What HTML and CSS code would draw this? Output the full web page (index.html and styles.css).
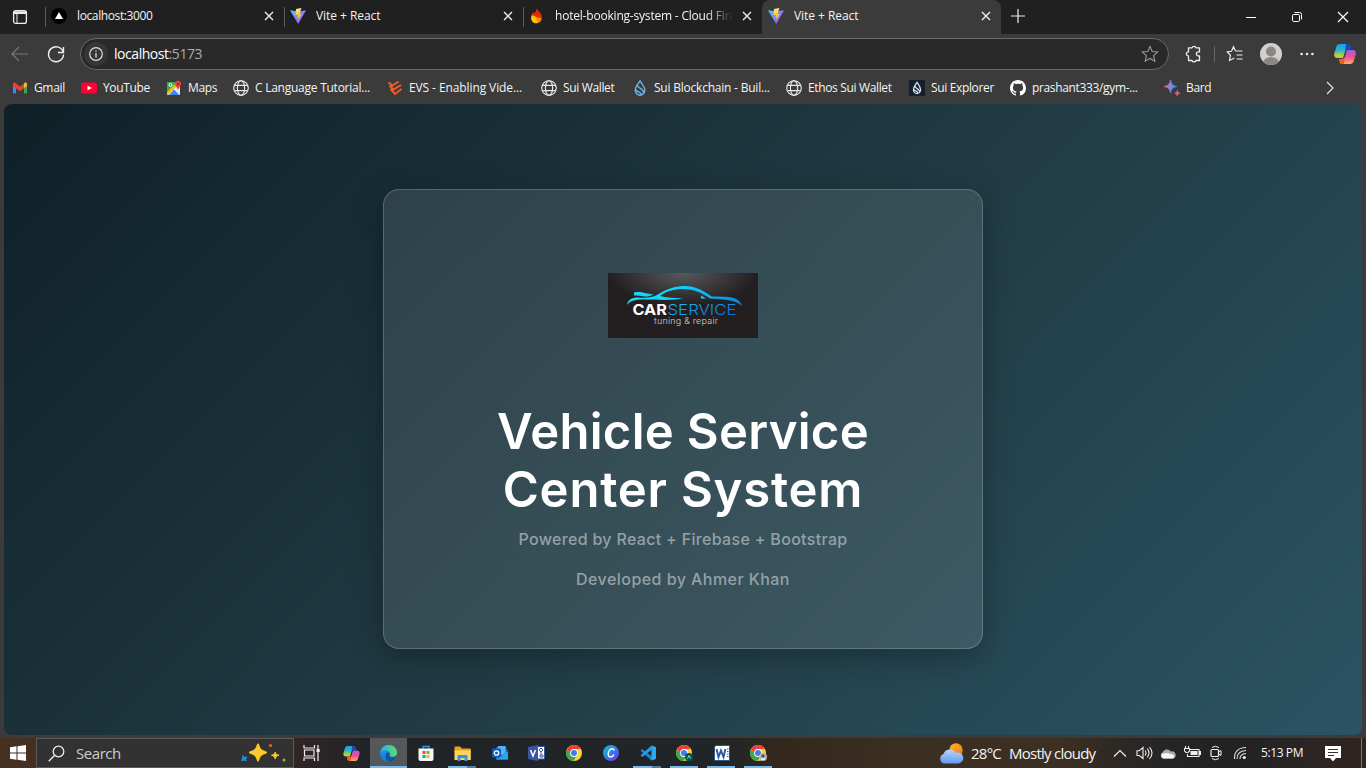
FILE: index.html
```html
<!DOCTYPE html>
<html lang="en">
<head>
<meta charset="utf-8">
<title>Vite + React</title>
<link rel="stylesheet" href="styles.css">
</head>
<body>
<svg class="defs" width="0" height="0">
  <defs>
    <linearGradient id="vA" x1="0" y1="0" x2="1" y2="1"><stop offset="0" stop-color="#41d1ff"/><stop offset="1" stop-color="#bd34fe"/></linearGradient>
    <linearGradient id="vB" x1="0" y1="0" x2="0" y2="1"><stop offset="0" stop-color="#ffea83"/><stop offset="1" stop-color="#ffa800"/></linearGradient>
    <linearGradient id="cpA" x1="0" y1="0" x2="0" y2="1"><stop offset="0" stop-color="#1b9df0"/><stop offset=".45" stop-color="#28b6c8"/><stop offset=".8" stop-color="#b5cf3a"/><stop offset="1" stop-color="#ffb52b"/></linearGradient>
    <linearGradient id="cpB" x1="0" y1="0" x2="0" y2="1"><stop offset="0" stop-color="#a25bf0"/><stop offset=".5" stop-color="#ee5090"/><stop offset="1" stop-color="#ffae62"/></linearGradient>
    <linearGradient id="bd" x1="0" y1="0" x2="1" y2="0"><stop offset="0" stop-color="#e8706c"/><stop offset=".5" stop-color="#8a80dc"/><stop offset="1" stop-color="#1d9bf0"/></linearGradient>
    <linearGradient id="edA" x1="0" y1="0" x2="1" y2="0"><stop offset="0" stop-color="#2aaeea"/><stop offset="1" stop-color="#5be06a"/></linearGradient>
    <linearGradient id="edB" x1="0" y1="0" x2="0" y2="1"><stop offset="0" stop-color="#1da1e6"/><stop offset="1" stop-color="#1878cc"/></linearGradient>
    <linearGradient id="cv" x1="0" y1="0" x2="1" y2="1"><stop offset="0" stop-color="#12c3ce"/><stop offset=".5" stop-color="#2f80e8"/><stop offset="1" stop-color="#7d2ae8"/></linearGradient>
    <linearGradient id="wx" x1="0" y1="0" x2="0" y2="1"><stop offset="0" stop-color="#b8d6ff"/><stop offset="1" stop-color="#5f9af0"/></linearGradient>
    <linearGradient id="sun" x1="0" y1="0" x2="1" y2="1"><stop offset="0" stop-color="#ffb52b"/><stop offset="1" stop-color="#f07812"/></linearGradient>
    <linearGradient id="car" x1="0" y1="0" x2="1" y2="0"><stop offset="0" stop-color="#18e0f8"/><stop offset=".5" stop-color="#08d2fa"/><stop offset="1" stop-color="#0c7fe0"/></linearGradient>
    <linearGradient id="svc" x1="0" y1="0" x2="1" y2="1"><stop offset="0" stop-color="#1ccaf0"/><stop offset="1" stop-color="#0d60d8"/></linearGradient>
    <radialGradient id="glow" cx=".5" cy="0" r=".5"><stop offset="0" stop-color="#58585c"/><stop offset="1" stop-color="#231f20"/></radialGradient>
    <symbol id="vite" viewBox="0 0 16 16"><path d="M0 2.2 8.2 16 16 2.2 8.4 3.6Z" fill="url(#vA)"/><path d="M11.4 0 6 1.1 5.500 7.300 8 6.800 7.400 10.600 8.800 10.200 7.900 13 11.800 6 9.400 6.400Z" fill="url(#vB)"/></symbol>
    <symbol id="x" viewBox="0 0 10 10"><path d="M1 1 9 9M9 1 1 9" stroke="#eee" stroke-width="1.4" fill="none"/></symbol>
    <symbol id="globe" viewBox="0 0 16 16"><g fill="none" stroke="#e8e8e8" stroke-width="1.15"><circle cx="8" cy="8" r="7.3"/><ellipse cx="8" cy="8" rx="3.6" ry="7.3"/><path d="M1.5 5.4h13M1.5 10.6h13"/></g></symbol>
    <symbol id="drop" viewBox="0 0 16 16"><path d="M8 .9C10 3.9 12.8 6.8 12.8 10.2A4.8 5 0 0 1 3.2 10.2C3.2 6.8 6 3.9 8 .9ZM5.6 5C5.3 9 11 7.2 11.6 13M3.5 9.3C5 12.8 8.2 10.6 9.5 15" fill="none" stroke="currentColor" stroke-width="1.4"/></symbol>
    <symbol id="dropS" viewBox="0 0 16 16"><path d="M8 2.300C9.500 4.700 11.600 7 11.600 9.700A3.600 3.800 0 0 1 4.400 9.700C4.400 7 6.500 4.700 8 2.300ZM6 6C6 9 10 7.700 10.700 12M4.600 9.300C6 11.700 8 10 9 13.400" fill="none" stroke="currentColor" stroke-width="1.200"/></symbol>
    <symbol id="copilot" viewBox="0 0 22 20"><path d="M6 0h7.5c1.8 0 2.4 1 2.8 2.6L17 5h-3.3c-1.6 0-2.3 1-2.8 2.7L9 14H3.5C.6 14-.4 12 .4 9L2.2 3.3C2.9 1 4 0 6 0Z" fill="url(#cpA)"/><path d="M12 0h1.8c1.5 0 2.2 1 2.6 2.6L17 5h-3.4c-1.3 0-1.9.5-2.4 1.7Z" fill="#1747c4"/><path d="M16 20H8.4c-1.8 0-2.4-1-2.8-2.6L5 15h3.2c1.6 0 2.3-1 2.8-2.7L13 6h5.5c2.9 0 3.9 2 3.1 5l-1.8 5.7C19.1 19 18 20 16 20Z" fill="url(#cpB)"/><path d="M10 20H8.3c-1.7 0-2.3-1-2.7-2.6L5 15h3.2c1.3 0 1.9-.5 2.5-1.7Z" fill="#f15b2a"/></symbol>
    <symbol id="chrome" viewBox="0 0 16 16"><circle cx="8" cy="8" r="8" fill="#ffd23c"/><path d="M1.1 4A8 8 0 0 1 14.9 4H8L4.5 10Z" fill="#ea4335"/><path d="M1.1 4A8 8 0 0 0 7.3 16l4-6L4.7 10.2Z" fill="#34a853"/><circle cx="8" cy="8" r="3.9" fill="#fff"/><circle cx="8" cy="8" r="3" fill="#3b7ded"/></symbol>
  </defs>
</svg>

<header class="tabs">
  <svg class="side-icon" width="16" height="16" viewBox="0 0 16 16"><rect x="1.6" y="1.6" width="12.8" height="12.8" rx="2.2" fill="none" stroke="#eee" stroke-width="1.3"/><path d="M1.5 2.3h13v2.700h-13z" fill="#eee"/><path d="M5 5v9" stroke="#eee"/></svg>
  <div class="tab"><svg width="16" height="16" viewBox="0 0 16 16"><circle cx="8" cy="8" r="8" fill="#000"/><path d="M8 4 12 11H4Z" fill="#fff"/></svg><span class="title t1">localhost:3000</span><svg class="close" width="10" height="10"><use href="#x"/></svg></div>
  <div class="tab"><svg width="16" height="16"><use href="#vite"/></svg><span class="title t2">Vite + React</span><svg class="close" width="10" height="10"><use href="#x"/></svg></div>
  <div class="tab"><svg width="16" height="16" viewBox="0 0 16 16"><path d="M7.5.5C9 3 13 5 13 9.5A5.500 5.800 0 0 1 2 10C2 7 3.500 5.500 4 4L5.300 5.500C6.500 4 7.500 2.500 7.500.5Z" fill="#dd2c00"/><path d="M2.500 7.500C5 7 8.500 9 9 14.500 5 17 1 13 2.500 7.500Z" fill="#ffc400"/><path d="M6 8.500c2 1.500 3 3.500 3 6 2-.6 3-2 3.500-4Z" fill="#ff9100"/></svg><span class="title t3 fade">hotel-booking-system - Cloud Fire</span><svg class="close" width="10" height="10"><use href="#x"/></svg></div>
  <div class="tab active"><svg width="16" height="16"><use href="#vite"/></svg><span class="title t2">Vite + React</span><svg class="close" width="10" height="10"><use href="#x"/></svg></div>
  <svg class="plus" width="14" height="14" viewBox="0 0 14 14"><path d="M7 0v14M0 7h14" stroke="#eee" stroke-width="1.2"/></svg>
  <div class="winctl">
    <svg width="12" height="12" viewBox="0 0 12 12"><path d="M1 6.500h10" stroke="#fff"/></svg>
    <svg width="12" height="12" viewBox="0 0 12 12"><g fill="none" stroke="#fff"><rect x="1.500" y="3.500" width="7" height="7" rx="1.200"/><path d="M3.500 1.500h5a2 2 0 0 1 2 2v5"/></g></svg>
    <svg width="12" height="12" viewBox="0 0 12 12"><path d="M1 1 11 11M11 1 1 11" stroke="#fff" stroke-width="1.200"/></svg>
  </div>
</header>

<nav class="toolbar">
  <svg width="18" height="16" viewBox="0 0 18 16"><path d="M8 1 1 8l7 7M1 8h16" fill="none" stroke="#777" stroke-width="1.200"/></svg>
  <svg class="reload" width="18" height="18" viewBox="0 0 18 18"><path d="M16.300 7.500A7.500 7.500 0 1 0 16.500 9.500M16.500 2v5.500H11" fill="none" stroke="#eee" stroke-width="1.400"/></svg>
  <div class="address">
    <span class="info"><svg width="14" height="14" viewBox="0 0 14 14"><circle cx="7" cy="7" r="6.300" fill="none" stroke="#ddd" stroke-width="1.200"/><path d="M7 6v4.500M7 3.500v1.300" stroke="#ddd" stroke-width="1.300"/></svg></span>
    <span class="url">localhost<i>:5173</i></span>
    <svg class="star" width="18" height="18" viewBox="0 0 18 18"><path d="M9 1.500 11.200 6.500 16.700 7 12.600 10.700 13.800 16.200 9 13.400 4.200 16.200 5.400 10.700 1.300 7 6.800 6.500Z" fill="none" stroke="#999" stroke-width="1.100"/></svg>
  </div>
  <div class="tools">
    <svg width="17" height="18" viewBox="0 0 17 18"><path d="M5 2.800H7A2.100 2.100 0 0 1 11 2.800H14.500V6.800H13.500A2.100 2.100 0 0 0 13.500 11H14.500V15.500H11A2.100 2.100 0 0 1 7 15.500H3.500V11A2.100 2.100 0 0 1 3.500 6.800V2.800Z" fill="none" stroke="#eee" stroke-width="1.300" stroke-linejoin="round"/></svg>
    <span class="sep"></span>
    <svg class="favs" width="18" height="18" viewBox="0 0 18 18"><path d="M9.500 6 7.500 1.800 5.500 6.300 1.200 7 4.400 10.300 3.500 15.500 8.300 13M9.500 6H16.500M10.500 10H16.500M10.500 14H16.500" fill="none" stroke="#eee" stroke-width="1.200"/></svg>
    <svg class="avatar" width="22" height="22" viewBox="0 0 22 22"><clipPath id="av"><circle cx="11" cy="11" r="11"/></clipPath><g clip-path="url(#av)"><path d="M0 0h22v22H0z" fill="#d2d0ce"/><circle cx="11" cy="8.500" r="5" fill="#8a8886"/><ellipse cx="11" cy="20" rx="8" ry="6" fill="#8a8886"/></g></svg>
    <svg class="dots" width="14" height="4" viewBox="0 0 14 4"><g fill="#eee"><circle cx="1.600" cy="2" r="1.300"/><circle cx="7" cy="2" r="1.300"/><circle cx="12.400" cy="2" r="1.300"/></g></svg>
    <svg class="cp" width="22" height="20"><use href="#copilot"/></svg>
  </div>
</nav>

<nav class="bookmarks">
  <a><svg width="16" height="16" viewBox="0 0 16 16"><path d="M1 3v10.500h3V6Z" fill="#4285f4"/><path d="M15 3v10.500h-3V6Z" fill="#34a853"/><path d="M1 3.500 2.500 2.300 8 6.700 13.500 2.300 15 3.500V6L8 11.200 1 6Z" fill="#ea4335"/><path d="M12 3.500 13.500 2.300 15 3.500V6L12 8.200Z" fill="#fbbc04"/></svg><span>Gmail</span></a>
  <a><svg width="16" height="16" viewBox="0 0 16 16"><rect y="2.500" width="16" height="11" rx="2.500" fill="#f03"/><path d="M6.500 5.700 11 8 6.500 10.300Z" fill="#fff"/></svg><span>YouTube</span></a>
  <a><svg width="16" height="16" viewBox="0 0 16 16"><path d="M1 2h12v13H1z" fill="#34a853"/><path d="M1 15 14 3v12Z" fill="#e8eaed"/><path d="M3 15 8 9.500 13.500 15Z" fill="#4285f4"/><path d="M1 12 11 2h2v1L2 15H1Z" fill="#fbbc04"/><path d="M10 1.500C12 0 15 1 15 4c0 2-2 3-3 6C11 7 9 6 9 4Z" fill="#ea4335"/><circle cx="12" cy="4" r="1.200" fill="#9d241a"/><circle cx="4.500" cy="5" r="1.500" fill="none" stroke="#fff"/></svg><span>Maps</span></a>
  <a><svg width="16" height="16"><use href="#globe"/></svg><span class="bm-c">C Language Tutorial...</span></a>
  <a><svg width="16" height="16" viewBox="0 0 16 16"><path d="M11.500 1.500 5.500 5.500 1.500 2.500M14 5 6.500 9.500 2.500 5.500M14.500 9 8 14 3.500 9" fill="none" stroke="#f15a29" stroke-width="2"/></svg><span class="bm-e">EVS - Enabling Vide...</span></a>
  <a><svg width="16" height="16"><use href="#globe"/></svg><span>Sui Wallet</span></a>
  <a><svg class="blue" width="16" height="16"><use href="#drop"/></svg><span class="bm-b">Sui Blockchain - Buil...</span></a>
  <a><svg width="16" height="16"><use href="#globe"/></svg><span>Ethos Sui Wallet</span></a>
  <a><svg class="navy" width="16" height="16"><use href="#dropS"/></svg><span>Sui Explorer</span></a>
  <a><svg width="16" height="16" viewBox="0 0 16 16"><path fill="#fff" d="M8 0C3.580 0 0 3.580 0 8c0 3.540 2.290 6.530 5.470 7.590.4.070.55-.17.55-.38 0-.19-.01-.82-.01-1.490-2.010.37-2.530-.49-2.690-.94-.09-.23-.48-.94-.82-1.130-.28-.15-.68-.52-.01-.53.63-.01 1.080.58 1.230.82.72 1.210 1.870.87 2.330.66.070-.52.28-.87.51-1.070-1.780-.2-3.640-.89-3.640-3.950 0-.87.31-1.590.82-2.150-.08-.2-.36-1.020.08-2.120 0 0 .67-.21 2.200.82.64-.18 1.320-.27 2-.27s1.360.09 2 .27c1.530-1.040 2.200-.82 2.200-.82.44 1.100.16 1.920.08 2.120.51.56.82 1.270.82 2.150 0 3.070-1.870 3.750-3.650 3.950.29.25.54.73.54 1.480 0 1.070-.01 1.930-.01 2.200 0 .21.15.46.55.38A8 8 0 0 0 16 8c0-4.420-3.580-8-8-8Z"/></svg><span>prashant333/gym-...</span></a>
  <a><svg width="16" height="16" viewBox="0 0 16 16"><path d="M6.500 0C7.300 4 8.800 5.700 13 6.500 8.800 7.300 7.300 9 6.500 13 5.700 9 4.200 7.300 0 6.500 4.200 5.700 5.700 4 6.500 0Z" fill="url(#bd)" stroke="url(#bd)" stroke-width=".8"/><path d="M13.300 10.200c.3 1.900.9 2.500 2.700 3-1.800.4-2.400 1-2.700 2.800-.3-1.800-1-2.400-2.800-2.800 1.900-.5 2.500-1.100 2.800-3Z" fill="#dd6680" stroke="#dd6680" stroke-width=".7"/></svg><span>Bard</span></a>
  <svg class="more" width="8" height="14" viewBox="0 0 8 14"><path d="M1 1 7 7 1 13" fill="none" stroke="#ddd" stroke-width="1.300"/></svg>
</nav>

<main class="viewport">
  <section class="card">
    <svg class="logo" width="150" height="65" viewBox="0 0 150 65">
      <path d="M0 0h150v65H0z" fill="#231f20"/><path d="M0 0h150v65H0z" fill="url(#glow)"/>
      <path d="M19 32C20 26 25 24 31 24.500 37 25 43 24.500 48 22.500 60 15 68 13 77 13 89 13 97 19 104 23.500 117 24 131 22 134 33 127 26 112 26.500 102 25.500 94 20 86 16 75 16 65 16 59 18 52 23 60 25 67 25 75 25 64 28 48 26.500 39 26.500 29 26 22 27 19 32Z" fill="url(#car)"/>
      <path d="M26 19.500C34 18 37 21 46 21.500L40 23.500C35 24 33 22 26 22.500ZM93 22.500 98 25.500H93Z" fill="#18d3fa"/>
      <text class="lg-bold" x="24.500" y="41.500" textLength="34.500" lengthAdjust="spacingAndGlyphs">CAR</text>
      <text class="lg-thin" x="59.500" y="41.500" textLength="69" lengthAdjust="spacingAndGlyphs">SERVICE</text>
      <text class="lg-sub" x="46" y="51" textLength="64">tuning &amp; repair</text>
    </svg>
    <h1><span class="h-a">Vehicle Service</span><br><span class="h-b">Center System</span></h1>
    <p class="p-a">Powered by React + Firebase + Bootstrap</p>
    <p class="p-b">Developed by Ahmer Khan</p>
  </section>
</main>

<footer class="taskbar">
  <svg class="start" width="16" height="16" viewBox="0 0 16 16"><path d="M0 2.200 6.500 1.300V7.500H0ZM7.500 1.200 16 0V7.500H7.500ZM0 8.500H6.500V14.700L0 13.800ZM7.500 8.500H16V16L7.500 14.800Z" fill="#fff"/></svg>
  <div class="search">
    <svg width="17" height="17" viewBox="0 0 17 17"><circle cx="10.500" cy="6.500" r="5.300" fill="none" stroke="#eee" stroke-width="1.300"/><path d="M6.700 10.300.7 16.300" stroke="#eee" stroke-width="1.300"/></svg>
    <span>Search</span>
    <svg class="sparkles" width="46" height="20" viewBox="0 0 46 20"><g stroke-linejoin="round"><path d="M18 1.500C19.500 6.500 20.500 7.800 26 9.500 20.500 11.200 19.500 12.500 18 17.500 16.500 12.500 15.500 11.200 10 9.500 15.500 7.800 16.500 6.500 18 1.500Z" fill="#fbc92b" stroke="#fbc92b" stroke-width="2"/><path d="M35.200 9C36 11.500 36.500 11.700 39 12.200 36.500 12.900 36 13.500 35.200 16 34.400 13.500 34 12.900 31.500 12.200 34 11.700 34.400 11.500 35.200 9Z" fill="#fbc92b" stroke="#fbc92b"/></g><path d="M2.500 11.500 4.500 14 7.500 13.500 6 16.300 7 18.500 4 17.500 1 18.500 2 15.500Z" fill="#1696e8"/><circle cx="30.500" cy="2.500" r="1.600" fill="#f4622c"/><circle cx="44" cy="17" r="1.500" fill="#7bc142"/></svg>
  </div>
  <div class="apps">
    <span class="app view"><svg width="18" height="16" viewBox="0 0 18 16"><path d="M1 0v3h10.500V0M1 16v-3h10.500v3M1.500 5h9.500v6H1.500ZM15 0v16" fill="none" stroke="#eee" stroke-width="1.200"/><path d="M13.500 4h3.200v3h-3.200z" fill="#eee"/></svg></span>
    <span class="app"><svg width="17" height="15"><use href="#copilot"/></svg></span>
    <span class="app current"><svg width="17" height="17" viewBox="0 0 16 16"><circle cx="8" cy="8" r="8" fill="url(#edB)"/><path d="M.2 7C1 2.500 4.200 0 8 0 13 0 16 3.500 16 7c0 3-2.500 4-4.500 4-2.500 0-3-.8-2.300-1.800C10 7.500 8.500 5 6 5 3 5 1 6.500.2 7Z" fill="url(#edA)"/><path d="M8.600 9.200C8 11 10 13 14.800 12 13.500 14 12 15.300 9.500 15.900 6 15 4.500 12 5.500 9 6 7.500 7 7 8.600 6.800Z" fill="#12549b"/><path d="M9.200 9.200C8.700 10 9.200 11.200 12 11.200 13.500 11.200 14.700 10.700 16 9.800L15.500 12C11 13.500 7 11.500 9 7.500 9.700 8 9.500 8.800 9.200 9.200Z" fill="#50565b"/></svg></span>
    <span class="app"><svg width="16" height="17" viewBox="0 0 16 17"><path d="M5 4V1.500h6V4" fill="none" stroke="#2b9ae0" stroke-width="1.300"/><path d="M.5 3.500h15V14a2 2 0 0 1-2 2h-11a2 2 0 0 1-2-2Z" fill="#f5f5f5"/><path d="M4.500 6H7.500V9H4.500Z" fill="#f25022"/><path d="M8.500 6h3v3h-3z" fill="#7fba00"/><path d="M4.500 10h3v3h-3z" fill="#00a4ef"/><path d="M8.500 10h3v3h-3z" fill="#ffb900"/></svg></span>
    <span class="app open multi"><svg width="17" height="15" viewBox="0 0 17 15"><path d="M.5 1.500A1 1 0 0 1 1.500.5H6L8 2.500h8a.8.8 0 0 1 .8.800V6H.5Z" fill="#e8a317"/><path d="M.5 4.500h16.300V14H.5Z" fill="#ffd75e"/><path d="M3.500 15V9h10v6h-3v-3h-4v3Z" fill="#3f92d8"/></svg></span>
    <span class="app"><svg width="16" height="14" viewBox="0 0 16 14"><path d="M4 1h10l2 5v7.500H4Z" fill="#1073c6"/><path d="M6 0h7.500v7L10 9 6 7Z" fill="#50b8f0"/><path d="M16 5.500v8H4L11 9Z" fill="#28a8ea"/><rect y="2.500" width="9" height="9" rx="1" fill="#0f5ebd"/><circle cx="4.500" cy="7" r="2.200" fill="none" stroke="#fff" stroke-width="1.300"/></svg></span>
    <span class="app"><svg width="17" height="16" viewBox="0 0 17 16"><path d="M8 1.500h8.500v12.500H8z" fill="#fff" stroke="#3955a3"/><path d="M0 2 10 0V16L0 14Z" fill="#3955a3"/><path d="M2.500 5 5 11 7.500 5" fill="none" stroke="#fff" stroke-width="1.500"/><path d="m13 3 2 2-2 2-2-2ZM13 7v3M12 10h3v2h-3z" fill="none" stroke="#3955a3"/></svg></span>
    <span class="app"><svg width="16" height="16"><use href="#chrome"/></svg></span>
    <span class="app"><svg width="16" height="16" viewBox="0 0 16 16"><circle cx="8" cy="8" r="8" fill="url(#cv)"/><path d="M11 5.500C11 3 7.500 3 6 6 4.500 9 5 12 7.500 12 9 12 10.300 11 11 9.700" fill="none" stroke="#fff" stroke-width="1.400"/></svg></span>
    <span class="app open multi"><svg width="16" height="16" viewBox="0 0 16 16"><path d="M11.500.5 16 2.300V13.700L11.500 15.500 .5 5.800 2.200 4 12 11.500Z" fill="#1687d0"/><path d="M11.500.5V5L2.200 12 .5 10.200Z" fill="#2699df"/><path d="M11.500.5 16 2.300V13.700L11.500 15.500Z" fill="#2fa8ee"/></svg></span>
    <span class="app open"><svg width="18" height="17" viewBox="0 0 18 17"><svg width="16" height="16"><use href="#chrome"/></svg><circle cx="13" cy="12" r="4" fill="#00584e"/><path d="m11.500 13.500 1.500-3 1.500 3" fill="none" stroke="#9cc"/></svg></span>
    <span class="app open"><svg width="16" height="16" viewBox="0 0 16 16"><path d="M2 .5h13.500v15H.5V2Z" fill="#fff" stroke="#2b579a"/><path d="m2.500 4 2 8L7 5.500 9.500 12l2-8" fill="none" stroke="#2b579a" stroke-width="1.900"/><path d="M13 4h1.500M13 6.500h1.500M13 9h1.500M13 11.500h1.500" stroke="#2b579a"/></svg></span>
    <span class="app open"><svg width="18" height="17" viewBox="0 0 18 17"><svg width="16" height="16"><use href="#chrome"/></svg><circle cx="13" cy="12" r="4" fill="#b8b8b8"/><circle cx="13" cy="11" r="1.700" fill="#456"/><path d="M11 15c0-3 4-3 4 0" fill="#eee"/></svg></span>
  </div>
  <div class="tray">
    <svg class="wx" width="25" height="21" viewBox="0 0 25 21"><circle cx="17" cy="7" r="6.700" fill="url(#sun)"/><path d="M5 20.500A5 5 0 0 1 4.500 11 6.500 6.500 0 0 1 16.500 10 5.500 5.500 0 1 1 19 20.500Z" fill="url(#wx)"/></svg>
    <span class="temp">28°C</span><span class="sky">Mostly cloudy</span>
    <div class="tray-icons">
      <svg width="14" height="8" viewBox="0 0 14 8"><path d="M1 7.500 7 1.500 13 7.500" fill="none" stroke="#eee" stroke-width="1.200"/></svg>
      <svg width="17" height="14" viewBox="0 0 17 14"><path d="M1 4.700h2.300L7 1.500v11L3.300 9.500H1ZM9 4.500q2 2.500 0 5M11.300 2.700q3.400 4.300 0 8.600M13.500 1q5 6 0 12" fill="none" stroke="#eee" stroke-width="1.100"/></svg>
      <svg width="16" height="11" viewBox="0 0 16 11"><path d="M3.500 10.500A3.200 3.200 0 0 1 2.500 4.500 5 5 0 0 1 11 3.500a3.500 3.500 0 0 1 2 7Z" fill="#aaa"/><path d="M3 10.500A3 3 0 0 1 2.500 5.500L7 5l6 1.500a2.200 2.200 0 0 1 0 4Z" fill="#f5f5f5"/></svg>
      <svg class="battery" width="17" height="13" viewBox="0 0 17 13"><path d="M5.500 3.500h9.500v7H3.500V8M15.500 5.500h1v3h-1ZM1.500 0v3M4.500 0v3M.5 2.500h5v2.500l-1.500 1.500h-2L.5 5Z" fill="none" stroke="#eee" stroke-width="1.100"/><path d="M6.500 5h7v4h-7z" fill="#eee"/></svg>
      <svg width="14" height="16" viewBox="0 0 14 16"><rect x="2" y="4.500" width="7.500" height="7" rx="1" fill="none" stroke="#eee" stroke-width="1.200"/><path d="m9.500 7 2.500-1.500v5L9.500 9M3 2.500q3-2.500 7 0M3 13.500q3 2.500 7 0" fill="none" stroke="#eee"/></svg>
      <svg width="14" height="14" viewBox="0 0 14 14"><path d="M1.500 13Q1 2 13 1.500M4 13Q4 5 13 4.500M7 13Q7 8 13 7.500" fill="none" stroke="#ddd" stroke-width="1.100"/><circle cx="11.300" cy="11.500" r="1.600" fill="#eee"/></svg>
    </div>
    <span class="time">5:13 PM</span>
    <svg class="note" width="16" height="17" viewBox="0 0 16 17"><path d="M0 1h16v12h-5l-3 3.500L5 13H0Z" fill="#fff"/><path d="M3 4.500h10M3 7.500h10M3 10.500h6" stroke="#333"/></svg>
  </div>
</footer>
</body>
</html>
```
FILE: styles.css
```css
* { box-sizing: border-box; }
body { margin: 0; width: 1366px; height: 768px; overflow: hidden; display: flex; flex-direction: column; background: #3b3b3b; color: #f4f4f4; font-family: "Open Sans", "Noto Sans", sans-serif; font-size: 12px; }
.defs { position: absolute; }
svg { display: block; flex: none; }
span { white-space: nowrap; }

.tabs { height: 34px; display: flex; align-items: center; background: #202020; padding-left: 12px; flex: none; }
.side-icon { margin-right: 17px; }
.tab { width: 239px; height: 34px; display: flex; align-items: center; padding: 0 10px 2px 6px; background: linear-gradient(#5c5c5c, #5c5c5c) -1px 7px / 2px 20px no-repeat; }
.tab:nth-of-type(1) { background-position: 0 7px; background-size: 1px 20px; }
.tab.active { background: #3b3b3b; border-radius: 8px 8px 0 0; }
.title { margin-left: 10px; width: 178px; overflow: hidden; padding-bottom: 1px; }
.t1 { letter-spacing: -0.38px; }
.t2 { letter-spacing: -0.05px; }
.t3 { letter-spacing: -0.2px; }
.fade { -webkit-mask-image: linear-gradient(90deg, #000 85%, transparent); mask-image: linear-gradient(90deg, #000 85%, transparent); }
.close { margin-left: auto; }
.plus { margin: -3px 0 0 10px; }
.winctl { margin-left: auto; display: flex; gap: 34px; padding-right: 17px; }

.toolbar { height: 40px; flex: none; display: flex; align-items: center; padding-left: 11px; }
.reload { margin-left: 18px; }
.address { width: 1089px; height: 32px; margin-left: 15px; padding: 0 9px 0 3px; border: 1px solid #6a6a6a; border-radius: 16px; background: #292929; display: flex; align-items: center; }
.info { width: 24px; height: 24px; border-radius: 12px; background: #353535; display: flex; align-items: center; justify-content: center; }
.url { margin-left: 6px; padding-bottom: 1px; font-size: 14px; letter-spacing: -0.45px; color: #fff; }
.url i { font-style: normal; color: #aaa; }
.star { margin-left: auto; }
.tools { flex: 1; display: flex; align-items: center; padding-left: 16px; }
.sep { width: 1px; height: 16px; margin-left: 12px; background: #666; }
.favs { margin-left: 11px; }
.avatar { margin-left: 16px; }
.dots { margin-left: 18px; }
.cp { margin-left: 20px; }

.bookmarks { height: 30px; flex: none; display: grid; grid-template-columns: 69px 85px 67px 154px 154px 91px 154px 123px 101px 154px 162px 8px; align-items: center; padding: 0 0 2px 12px; }
.bookmarks a { display: flex; align-items: center; gap: 6px; letter-spacing: -0.35px; }
.bookmarks a span { padding-bottom: 1px; }
.bookmarks .bm-c { letter-spacing: -0.25px; }
.bookmarks .bm-e { letter-spacing: -0.1px; }
.bookmarks .bm-b { letter-spacing: -0.22px; }
.blue { color: #6cb4e4; }
.navy { color: #dce8f4; background: #14202f; }

.viewport { width: 1358px; height: 631px; margin-left: 4px; padding-bottom: 2px; flex: none; border-radius: 8px; background: linear-gradient(135deg, #0f2027, #203a43, #2c5364); display: flex; align-items: center; justify-content: center; }
.card { width: 600px; height: 460px; border: 1px solid rgba(255,255,255,.2); border-radius: 16px; background: rgba(255,255,255,.1); box-shadow: 0 8px 32px rgba(0,0,0,.3); display: flex; flex-direction: column; align-items: center; padding-top: 83px; }
.lg-bold { font: 700 15px Inter, sans-serif; fill: #fff; }
.lg-thin { font: 300 15px Inter, sans-serif; fill: url(#svc); }
.lg-sub { font: 300 9px Inter, sans-serif; fill: #d0d0d0; }
h1 { margin: 65px 0 0; font: 600 49px/58px Inter, sans-serif; color: #fff; text-align: center; }
.h-a { letter-spacing: 0.3px; }
.h-b { letter-spacing: 0.8px; }
.card p { margin: 8px 0 0; font: 500 16px/24px Inter, sans-serif; color: #94a1a7; }
.card .p-a { letter-spacing: 0.32px; }
.card .p-b { margin-top: 16px; letter-spacing: 0.45px; }

.taskbar { height: 30px; margin-top: 3px; flex: none; display: flex; background: linear-gradient(90deg, #463021 0, #3a2825 260px, #2e2426 310px, #202427 370px, #202528 720px, #34281d 780px, #3b2f22 900px, #3d3022 1060px, #2a2725 1130px, #202224 1230px, #2b2524 1310px, #302420); }
.start { margin: 7px 10px 0; }
.search { width: 258px; height: 30px; border: 1px solid #5b5b5b; background: #323232; display: flex; align-items: center; padding: 0 7px 0 11px; font-size: 15px; letter-spacing: -0.45px; color: #ccc; }
.search span { margin-left: 11px; }
.sparkles { margin-left: auto; }
.apps { display: flex; }
.app { width: 37px; height: 30px; display: flex; align-items: center; justify-content: center; }
.view { width: 39px; padding-right: 3px; }
.current { background: linear-gradient(#76b9ed, #76b9ed) 0 28px / 37px 2px no-repeat, #54585b; }
.open { background: linear-gradient(#76b9ed, #76b9ed) 4px 28px / 28px 2px no-repeat; }
.multi { background: linear-gradient(90deg, #76b9ed 19px, #557e9c 19px) 4px 28px / 28px 2px no-repeat; }
.tray { width: 423px; margin: 0 4px 0 auto; display: flex; align-items: center; border-right: 1px solid #777; }
.wx { margin-top: 1px; }
.temp, .sky { font-size: 15px; letter-spacing: -0.75px; padding-bottom: 1px; }
.temp { width: 38px; margin-left: 7px; }
.sky { width: 87px; }
.tray-icons { display: grid; grid-template-columns: repeat(6, 24px); align-items: center; justify-items: center; margin-left: 12px; }
.battery { margin-top: -1px; }
.time { margin-left: 9px; width: 43px; letter-spacing: -0.4px; padding-bottom: 1px; }
.note { margin-left: 21px; }
```
